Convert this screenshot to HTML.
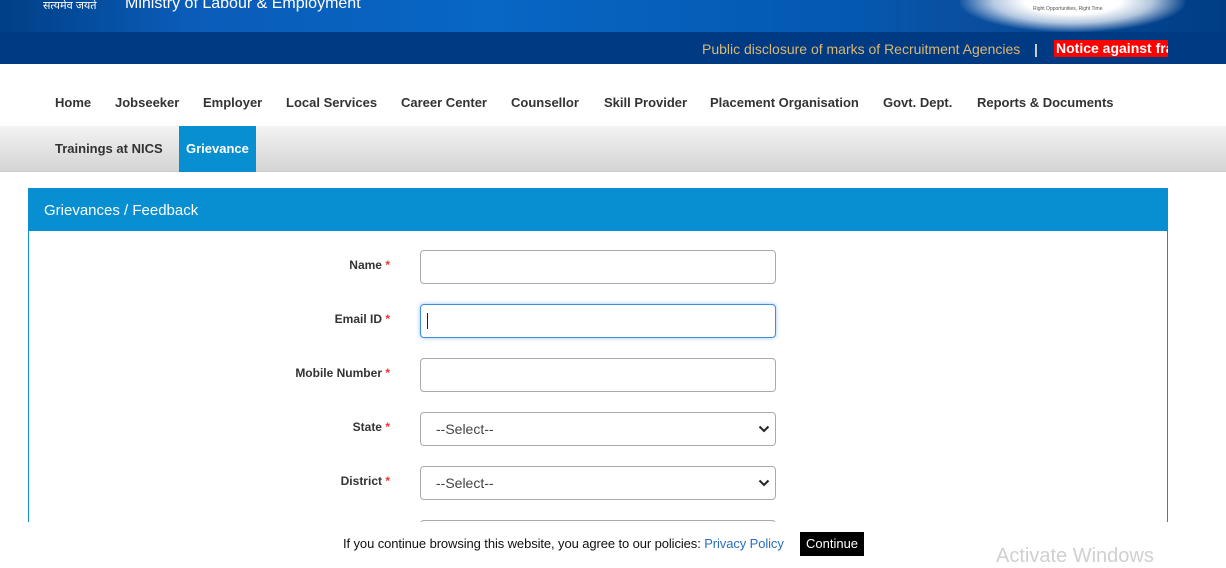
<!DOCTYPE html>
<html><head><meta charset="utf-8"><style>
*{box-sizing:border-box;margin:0;padding:0}
body{width:1226px;height:557px;overflow:hidden;background:#fff;font-family:"Liberation Sans",Arial,sans-serif;position:relative}
.top{position:absolute;left:0;top:0;width:1226px;height:32px;background:linear-gradient(90deg,#003f86 0%,#0a5cb8 15%,#0866c4 40%,#0458b0 70%,#0a4fa0 78%,#003d85 100%)}
.glow{position:absolute;left:960px;top:-30px;width:225px;height:62px;background:radial-gradient(ellipse at center,#fff 30%,rgba(255,255,255,0.7) 50%,rgba(255,255,255,0) 72%)}
.bar{position:absolute;left:0;top:32px;width:1226px;height:32px;background:#003a82}
.nav1{position:absolute;left:0;top:64px;width:1226px;height:62px;background:#fff}
.nav2{position:absolute;left:0;top:126px;width:1226px;height:46px;background:linear-gradient(#f3f3f3,#d4d4d4);border-bottom:1px solid #ccc}
.ni{position:absolute;font-size:13px;font-weight:bold;color:#333;top:95px}
.panel{position:absolute;left:28px;top:188px;width:1140px;height:360px;border:1px solid #0a8fd0}
.ph{height:42px;background:#078fd1;color:#fff;font-size:15px;padding:13px 15px}
.lbl{position:absolute;font-size:12px;font-weight:bold;color:#333;text-align:right;width:200px;left:190px}
.lbl span{color:#e33}
.inp{position:absolute;left:420px;width:356px;height:34px;border:1px solid #aaa;border-radius:4px;background:#fff;font-size:14px;color:#444;padding:8px 15px}
.inp svg{position:absolute;right:5px;top:12px}
</style></head><body>
<div class="top"></div><div class="glow"></div>
<div style="position:absolute;left:43px;top:0;color:#fff;font-size:11px;line-height:12px;font-family:'Liberation Sans','Noto Sans CJK SC',sans-serif">सत्यमेव जयते</div>
<div style="position:absolute;left:125px;top:-5px;color:#fff;font-size:16px">Ministry of Labour &amp; Employment</div>
<div style="position:absolute;left:1033px;top:6px;font-size:5px;color:#555">Right Opportunities, Right Time</div>
<div class="bar"></div>
<div style="position:absolute;left:702px;top:41px;color:#d9b874;font-size:14px;white-space:nowrap">Public disclosure of marks of Recruitment Agencies</div>
<div style="position:absolute;left:1034px;top:41px;color:#ddd;font-size:14px;font-weight:bold">|</div>
<div style="position:absolute;left:1054px;top:40px;width:114px;height:17px;background:#f00;color:#fff;font-size:14px;font-weight:bold;overflow:hidden;white-space:nowrap;padding-left:2px;line-height:17px">Notice against fraud</div>
<div class="nav1"></div><div class="nav2"></div>
<div class="ni" style="left:55px">Home</div>
<div class="ni" style="left:115px">Jobseeker</div>
<div class="ni" style="left:203px">Employer</div>
<div class="ni" style="left:286px">Local Services</div>
<div class="ni" style="left:401px">Career Center</div>
<div class="ni" style="left:511px">Counsellor</div>
<div class="ni" style="left:604px">Skill Provider</div>
<div class="ni" style="left:710px">Placement Organisation</div>
<div class="ni" style="left:883px">Govt. Dept.</div>
<div class="ni" style="left:977px">Reports &amp; Documents</div>
<div class="ni" style="left:55px;top:141px">Trainings at NICS</div>
<div style="position:absolute;left:179px;top:126px;width:77px;height:46px;background:#078fd1"></div>
<div class="ni" style="left:186px;top:141px;color:#fff">Grievance</div>
<div class="panel"><div class="ph">Grievances / Feedback</div></div>
<div class="lbl" style="top:258px">Name <span>*</span></div>
<div class="inp" style="top:250px"></div>
<div class="lbl" style="top:312px">Email ID <span>*</span></div>
<div class="inp" style="top:304px;border-color:#3b8ee0;box-shadow:0 0 4px rgba(60,140,230,0.5)"><div style="width:1px;height:16px;background:#222;margin-left:-9px"></div></div>
<div class="lbl" style="top:366px">Mobile Number <span>*</span></div>
<div class="inp" style="top:358px"></div>
<div class="lbl" style="top:420px">State <span>*</span></div>
<div class="inp" style="top:412px">--Select--<svg width="12" height="8" viewBox="0 0 12 8"><path d="M1.5 1.5 L6 6 L10.5 1.5" fill="none" stroke="#222" stroke-width="2"/></svg></div>
<div class="lbl" style="top:474px">District <span>*</span></div>
<div class="inp" style="top:466px">--Select--<svg width="12" height="8" viewBox="0 0 12 8"><path d="M1.5 1.5 L6 6 L10.5 1.5" fill="none" stroke="#222" stroke-width="2"/></svg></div>
<div class="inp" style="top:520px;height:20px"></div>
<div style="position:absolute;left:0;top:522px;width:1226px;height:35px;background:#fff"></div>
<div style="position:absolute;left:343px;top:536px;font-size:13px;color:#111;white-space:nowrap;letter-spacing:-0.1px">If you continue browsing this website, you agree to our policies: <span style="color:#2a6ebb">Privacy Policy</span></div>
<div style="position:absolute;left:800px;top:532px;width:64px;height:24px;background:#000;color:#fff;font-size:13px;padding:4px 6px">Continue</div>
<div style="position:absolute;left:996px;top:545px;font-size:20px;color:#d0d0d0;white-space:nowrap">Activate Windows</div>
</body></html>
